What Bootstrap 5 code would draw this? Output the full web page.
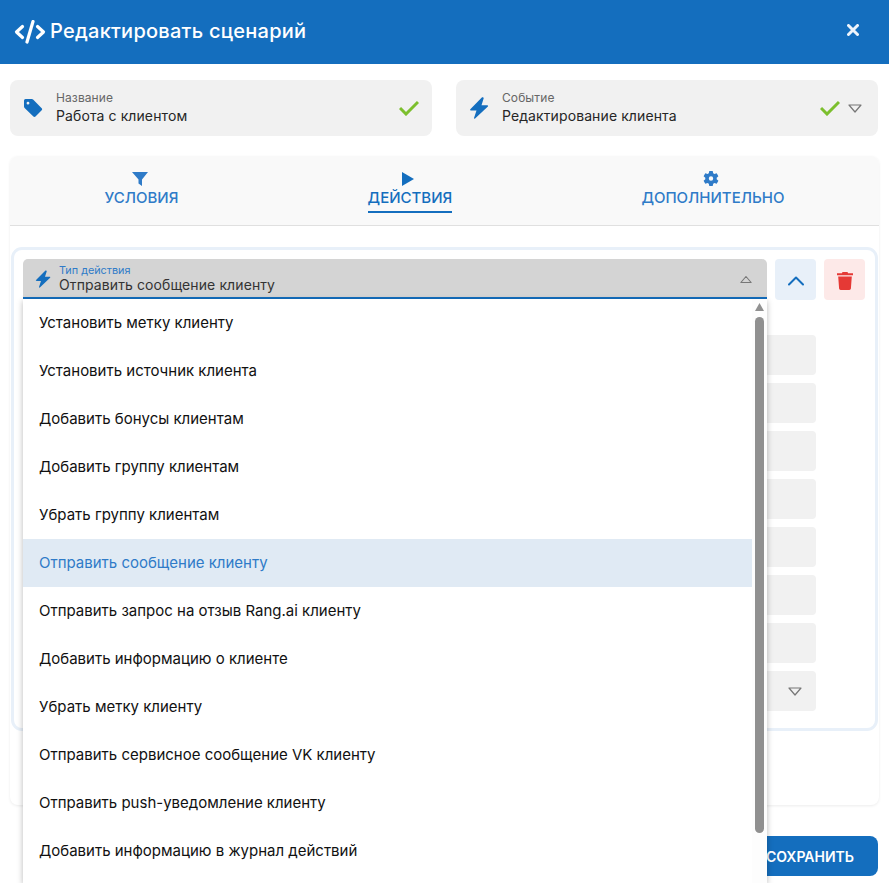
<!DOCTYPE html>
<html lang="ru">
<head>
  <meta charset="UTF-8" />
  <title>Редактировать сценарий</title>
  <link rel="stylesheet" href="https://cdn.jsdelivr.net/npm/bootstrap@5.3.3/dist/css/bootstrap.min.css"/>
  <style>
    html, body { height: 100%; overflow: hidden; }
    body { font-family: "Inter", "Liberation Sans", sans-serif; background: #fff; color: #212121; }
    .modal-shell { position: relative; height: 883px; overflow: hidden; }
    .top-bar { height: 64px; background: #146ebe; color: #fff; padding: 0 30px 0 14px; }
    .top-title { font-size: 20px; font-weight: 500; letter-spacing: .25px; margin-left: 4px; line-height: 1; position: relative; top: -1px; }
    .close-x { background: none; border: 0; padding: 0; line-height: 0; margin-top: -5px; }

    .summary-row { padding: 16px 11px 0 10px; gap: 24px; }
    .summary-box { flex: 1 1 0; height: 56px; background: #f1f1f1; border-radius: 8px; padding: 0 13px; }
    .summary-box .field-icon { width: 20px; margin-right: 13px; flex: none; }
    .field-label { font-size: 12px; line-height: 16px; color: #666; letter-spacing: .1px; }
    .field-value { font-size: 14px; line-height: 20px; color: #262626; letter-spacing: .1px; }
    .check-gap { margin-right: 8px; }
    .arrow-gap { margin-right: 3px; }

    .tabs-card { margin: 20px 10px 0 10px; height: 649px; border-radius: 8px; box-shadow: 0 1px 3px rgba(0,0,0,.08); }
    .tabs-head { height: 70px; background: #f9f9f9; border-bottom: 1px solid #e0e0e0; border-radius: 8px 8px 0 0; }
    .tab-slot { padding-top: 16px; color: #2f7bc8; font-size: 15px; font-weight: 500; line-height: 20px; }
    .tab-slot svg { display: block; margin: 0 4px 2px 0; }
    .tab-on { color: #146ebe; border-bottom: 2px solid #146ebe; padding-bottom: 3px; }

    .action-box { margin: 21px 1px 0 1px; height: 484px; border: 3px solid #e8f0f9; border-radius: 11px; padding: 9px 9px 0 9px; }
    .type-select { width: 744px; height: 40px; background: #d4d4d4; border-bottom: 2px solid #146ebe; border-radius: 5px 5px 0 0; padding: 2px 15px 0 12px; }
    .type-label { font-size: 10.800px; line-height: 11px; color: #2f7bc8; }
    .type-value { font-size: 14px; line-height: 17px; color: #333; letter-spacing: .1px; }
    .square-btn { width: 41px; height: 41px; border-radius: 4px; border: 0; padding: 0; margin-left: 8px; }
    .square-up { background: #e8f0f9; }
    .square-del { background: #fde9e8; }
    .ghost-fields { margin-top: 35px; gap: 8px; width: 793px; }
    .ghost-input { height: 40px; background: #f1f1f1; border-radius: 4px; padding-right: 14px; }

    .save-row { padding: 31px 11px 0 0; }
    .save-btn { width: 200px; height: 40px; background: #146ebe; border: 0; border-radius: 8px; color: #fff; font-size: 14px; font-weight: 600; padding: 0 24px 0 0; text-align: right; }

    .type-menu { position: absolute; left: 23px; top: 299px; width: 744px; height: 584px; background: #fff; box-shadow: 0 2px 6px rgba(0,0,0,.28); overflow: hidden; }
    .type-item { height: 48px; padding: 0 16px; font-size: 15px; line-height: 48px; color: #111; width: 729px; }
    .type-item.picked { background: #e0eaf4; color: #2f7bc8; }
    .fake-scroll { position: absolute; right: 0; top: 0; bottom: 0; width: 15px; background: #fdfdfd; }
    .fake-arrow { position: absolute; left: 3px; top: 4px; width: 9px; height: 8px; }
    .fake-thumb { position: absolute; left: 3px; top: 18px; width: 9px; height: 516px; border-radius: 5px; background: #909090; }
  </style>
</head>
<body>
  <div class="modal-shell">

    <div class="top-bar d-flex align-items-center justify-content-between">
      <div class="d-flex align-items-center">
        <svg width="32" height="24" viewBox="0 0 32 24" fill="none" stroke="#fff" stroke-width="3.200" stroke-linecap="round" stroke-linejoin="round">
          <path d="M8.5 6.5 2.5 12l6 5.500"/><path d="M23.500 6.500 29.500 12l-6 5.500"/><path d="M19 1.500 13 22"/>
        </svg>
        <span class="top-title">Редактировать сценарий</span>
      </div>
      <button class="close-x" aria-label="Закрыть">
        <svg width="12" height="12" viewBox="0 0 12 12" stroke="#eef4fb" stroke-width="3" stroke-linecap="round"><path d="M1.500 1.500l9 9M10.500 1.500l-9 9"/></svg>
      </button>
    </div>

    <div class="summary-row d-flex">
      <div class="summary-box d-flex align-items-center">
        <span class="field-icon">
          <svg class="d-block" width="20" height="20" viewBox="0 0 20 20"><path fill="#146ebe" fill-rule="evenodd" d="M1 2.500A1.500 1.500 0 0 1 2.500 1h6.300c.5 0 1 .2 1.300.5l8.600 8.700c.6.600.6 1.500 0 2.100l-6.200 6.200c-.6.600-1.500.600-2.100 0L1.600 9.900C1.200 9.500 1 9 1 8.500zM5 3.800a1.400 1.400 0 1 0 0 2.800 1.400 1.400 0 0 0 0-2.800z"/></svg>
        </span>
        <div class="flex-grow-1">
          <div class="field-label">Название</div>
          <div class="field-value">Работа с клиентом</div>
        </div>
        <svg width="20" height="16" viewBox="0 0 20 16" fill="none" stroke="#7cbf2e" stroke-width="3"><path d="M1 8l6 6L19 2"/></svg>
      </div>
      <div class="summary-box d-flex align-items-center">
        <span class="field-icon">
          <svg class="d-block" width="20" height="22" viewBox="0 0 20 22"><path fill="#146ebe" d="M12.800.6 1.300 12.300c-.4.500-.1 1.200.5 1.200h5.700L5 20.900c-.2.700.6 1.200 1.100.7L18.900 9.400c.4-.5.100-1.200-.6-1.200h-5.800l2.200-6.900C14.900.6 13.300 0 12.800.6z"/></svg>
        </span>
        <div class="flex-grow-1">
          <div class="field-label">Событие</div>
          <div class="field-value">Редактирование клиента</div>
        </div>
        <svg class="check-gap" width="20" height="16" viewBox="0 0 20 16" fill="none" stroke="#7cbf2e" stroke-width="3"><path d="M1 8l6 6L19 2"/></svg>
        <svg class="arrow-gap" width="14" height="9" viewBox="0 0 14 9" fill="none" stroke="#777" stroke-width="1.200" stroke-linejoin="round"><path d="M1 1h12L7 8z"/></svg>
      </div>
    </div>

    <div class="tabs-card">
      <div class="tabs-head d-flex justify-content-around">
        <div class="tab-slot d-flex flex-column align-items-center">
          <svg width="16" height="14" viewBox="0 0 16 14"><path fill="#2f7bc8" d="M0 0h16L10 7.500V14L6.500 11.500V7.500z"/></svg>
          <span>УСЛОВИЯ</span>
        </div>
        <div class="tab-slot d-flex flex-column align-items-center">
          <svg width="12" height="14" viewBox="0 0 12 14"><path fill="#146ebe" d="M0 0l12 7-12 7z"/></svg>
          <span class="tab-on">ДЕЙСТВИЯ</span>
        </div>
        <div class="tab-slot d-flex flex-column align-items-center">
          <svg width="16" height="14" viewBox="0 1 16 14" overflow="visible"><path fill="#2f7bc8" fill-rule="evenodd" d="M6.300 0h3.400l.5 2.300 1.200.7 2.300-.7 1.700 2.900-1.700 1.600v1.400l1.700 1.600-1.700 2.900-2.300-.7-1.200.7-.5 2.300H6.300l-.5-2.300-1.200-.7-2.300.7L.6 9.800l1.700-1.600V6.800L.6 5.200l1.700-2.900 2.300.7 1.200-.7zM8 5.300a2.200 2.200 0 1 0 0 4.400 2.200 2.200 0 0 0 0-4.400z"/></svg>
          <span>ДОПОЛНИТЕЛЬНО</span>
        </div>
      </div>

      <div class="action-box">
        <div class="d-flex">
          <div class="type-select d-flex align-items-center">
            <svg class="me-2" width="16" height="18" viewBox="0 0 20 22"><path fill="#146ebe" d="M12.800.6 1.300 12.300c-.4.500-.1 1.200.5 1.200h5.700L5 20.900c-.2.700.6 1.200 1.100.7L18.900 9.400c.4-.5.100-1.200-.6-1.200h-5.800l2.200-6.900C14.900.6 13.300 0 12.800.6z"/></svg>
            <div class="flex-grow-1">
              <div class="type-label">Тип действия</div>
              <div class="type-value">Отправить сообщение клиенту</div>
            </div>
            <svg width="12" height="9" viewBox="0 0 14 9" fill="none" stroke="#777" stroke-width="1.300" stroke-linejoin="round"><path d="M1 8h12L7 1z"/></svg>
          </div>
          <button class="square-btn square-up" aria-label="Свернуть">
            <svg width="16" height="10" viewBox="0 0 16 10" fill="none" stroke="#146ebe" stroke-width="2" stroke-linecap="round" stroke-linejoin="round"><path d="M1 8.500 8 1.500l7 7"/></svg>
          </button>
          <button class="square-btn square-del" aria-label="Удалить">
            <svg width="16" height="18" viewBox="0 0 16 18"><path fill="#e53935" d="M5.500 0h5l.6 1.200H16v2H0v-2h4.900zM1.200 4.500h13.600l-.9 12.100c-.1.800-.7 1.400-1.500 1.400H3.600c-.8 0-1.400-.6-1.500-1.400z"/></svg>
          </button>
        </div>
        <div class="ghost-fields d-flex flex-column">
          <div class="ghost-input"></div>
          <div class="ghost-input"></div>
          <div class="ghost-input"></div>
          <div class="ghost-input"></div>
          <div class="ghost-input"></div>
          <div class="ghost-input"></div>
          <div class="ghost-input"></div>
          <div class="ghost-input d-flex align-items-center justify-content-end">
            <svg width="14" height="9" viewBox="0 0 14 9" fill="none" stroke="#777" stroke-width="1.200" stroke-linejoin="round"><path d="M1 1h12L7 8z"/></svg>
          </div>
        </div>
      </div>
    </div>

    <div class="save-row d-flex justify-content-end">
      <button class="save-btn">СОХРАНИТЬ</button>
    </div>

    <div class="type-menu">
      <div class="type-item">Установить метку клиенту</div>
      <div class="type-item">Установить источник клиента</div>
      <div class="type-item">Добавить бонусы клиентам</div>
      <div class="type-item">Добавить группу клиентам</div>
      <div class="type-item">Убрать группу клиентам</div>
      <div class="type-item picked">Отправить сообщение клиенту</div>
      <div class="type-item">Отправить запрос на отзыв Rang.ai клиенту</div>
      <div class="type-item">Добавить информацию о клиенте</div>
      <div class="type-item">Убрать метку клиенту</div>
      <div class="type-item">Отправить сервисное сообщение VK клиенту</div>
      <div class="type-item">Отправить push-уведомление клиенту</div>
      <div class="type-item">Добавить информацию в журнал действий</div>
      <div class="fake-scroll">
        <svg class="fake-arrow" viewBox="0 0 9 8"><path fill="#909090" d="M4.500 0 9 8H0z"/></svg>
        <div class="fake-thumb"></div>
      </div>
    </div>

  </div>

  <script src="https://cdn.jsdelivr.net/npm/bootstrap@5.3.3/dist/js/bootstrap.bundle.min.js"></script>
</body>
</html>
